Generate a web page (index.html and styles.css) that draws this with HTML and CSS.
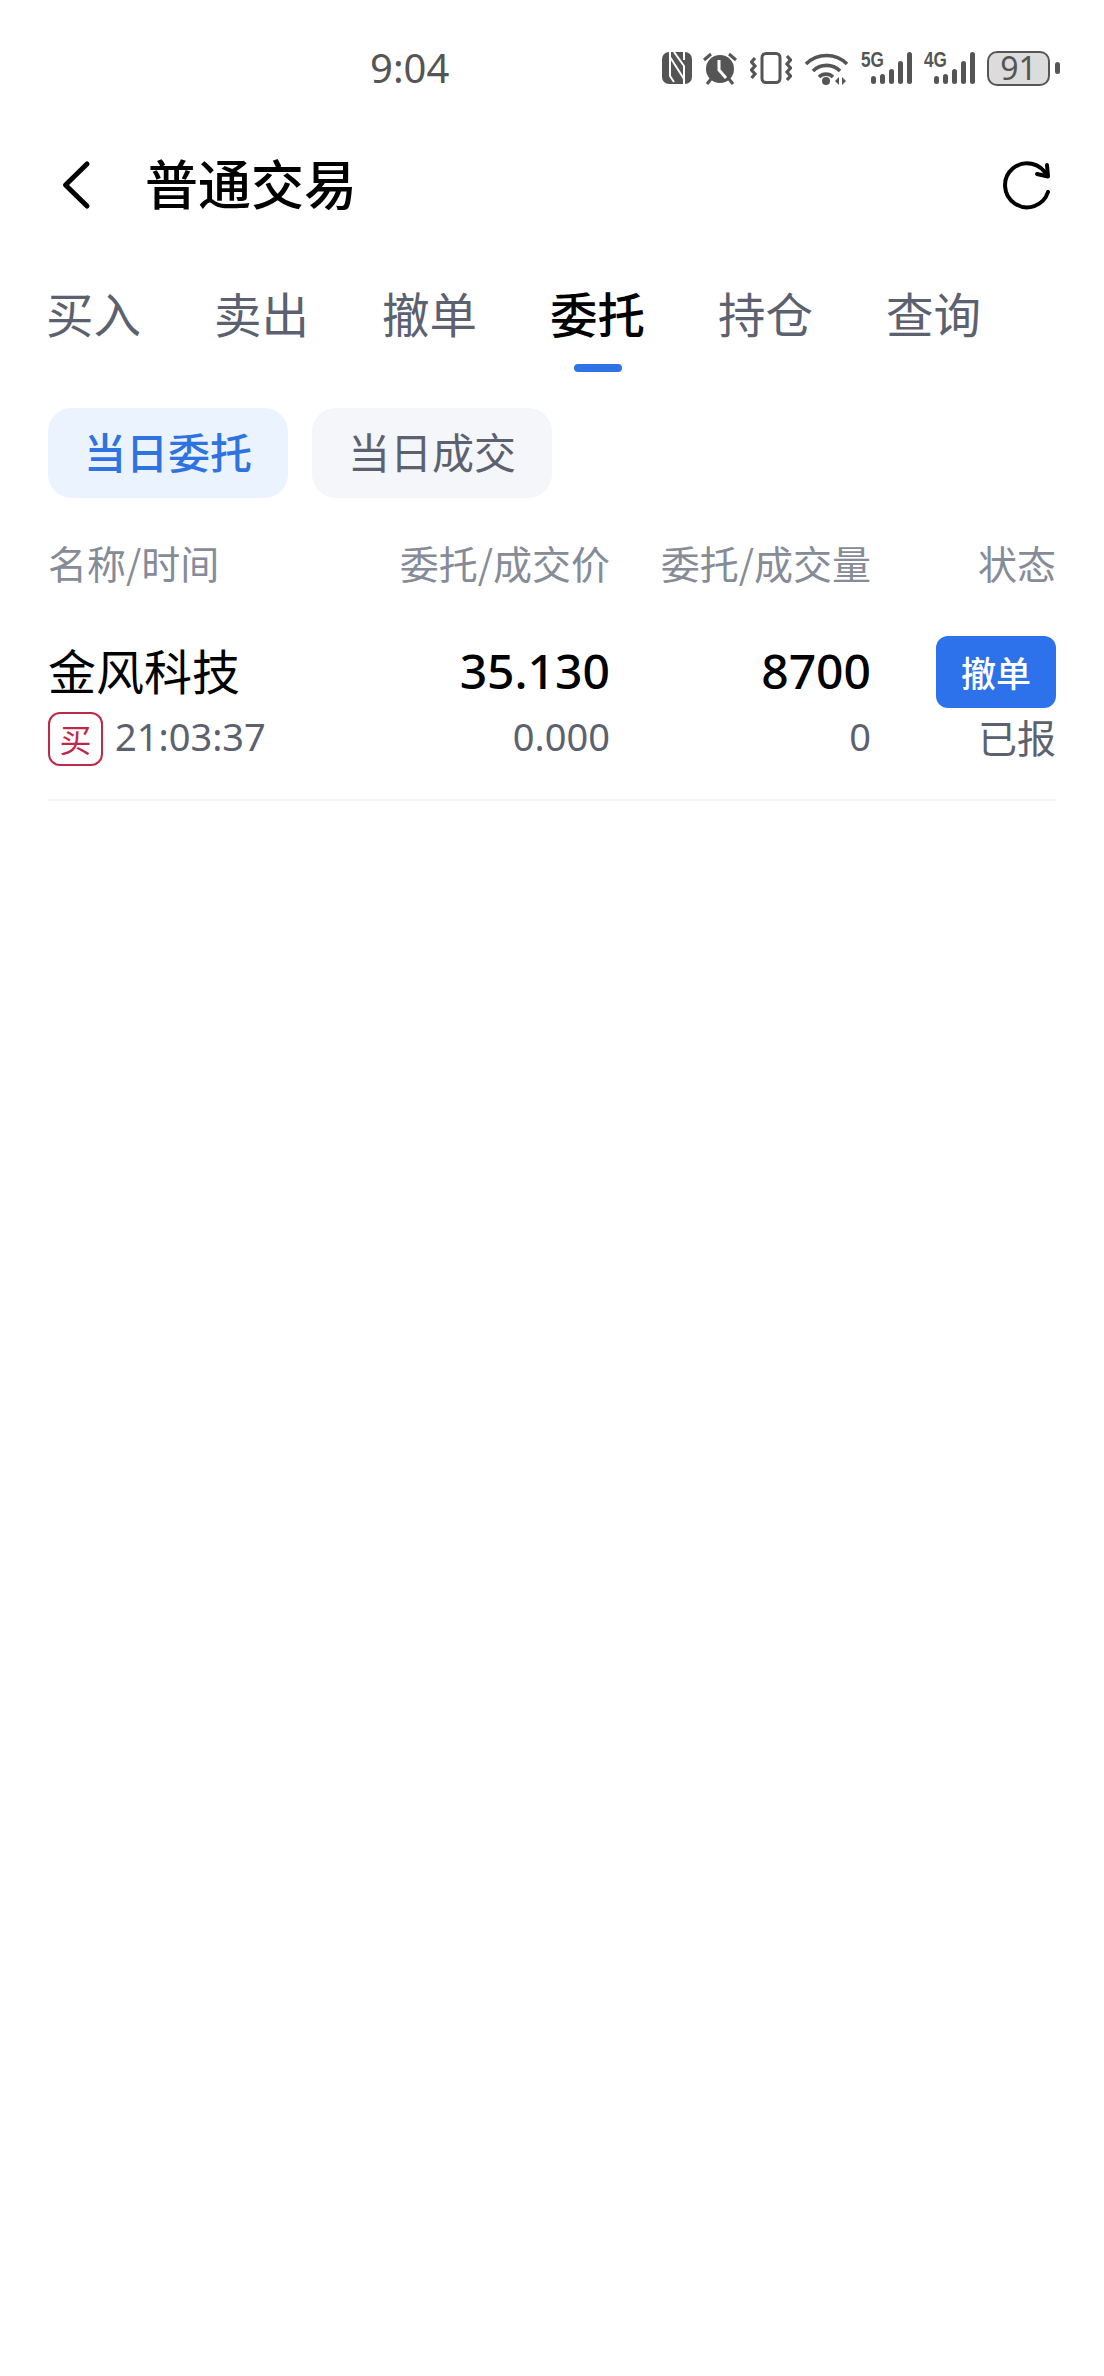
FILE: index.html
```html
<!DOCTYPE html>
<html lang="zh-CN">
<head>
<meta charset="utf-8">
<title>普通交易</title>
<link rel="stylesheet" href="styles.css">
</head>
<body>
<div class="page">
  <div class="status">
    <span class="time">9:04</span>
    <div class="status-icons">
      <svg width="30" height="32" viewBox="0 0 30 32"><rect width="30" height="32" rx="7" fill="#555"/><path d="M8 0V24L12 30M8 5L22 27V32M22 0V8M12 0L22 14V27" fill="none" stroke="#fff" stroke-width="2"/></svg>
      <svg class="alarm" width="36" height="34" viewBox="0 0 36 34"><circle cx="18" cy="18" r="14" fill="#555"/><path d="M17 9v10l7 8" fill="none" stroke="#fff" stroke-width="3"/><path d="M2 9l7-6M34 9l-7-6M9 28l-4 5M27 28l4 5" stroke="#555" stroke-width="3" fill="none"/></svg>
      <svg width="42" height="32" viewBox="0 0 42 32"><rect x="12" y="1.500" width="18" height="29" rx="4" fill="none" stroke="#555" stroke-width="3"/><path d="M5 6l-3.500 4 3.500 4-3.500 4 3.500 4-3.500 4M37 4l3.500 4-3.500 4 3.500 4-3.500 4 3.500 4-3.500 4" fill="none" stroke="#555" stroke-width="3.200"/></svg>
      <svg width="45" height="34" viewBox="0 0 45 34"><path d="M2 13a29 29 0 0 1 41 0M9 20a19 19 0 0 1 27 0M15 26a10 10 0 0 1 14 0" fill="none" stroke="#555" stroke-width="3.600"/><circle cx="22" cy="30" r="4" fill="#555"/><path d="M35 26l-4 4 4 4zM38 26l4 4-4 4z" fill="#555"/></svg>
      <div class="sig"><span class="sig-label">5G</span><svg width="41" height="32" viewBox="0 0 41 32"><g fill="#555"><rect x="0" y="24" width="5" height="8" rx="2.500"/><rect x="9" y="22" width="5" height="10" rx="2.500"/><rect x="18" y="17" width="5" height="15" rx="2.500"/><rect x="27" y="9" width="5" height="23" rx="2.500"/><rect x="36" y="0" width="5" height="32" rx="2.500"/></g></svg></div>
      <div class="sig"><span class="sig-label">4G</span><svg width="41" height="32" viewBox="0 0 41 32"><g fill="#555"><rect x="0" y="24" width="5" height="8" rx="2.500"/><rect x="9" y="22" width="5" height="10" rx="2.500"/><rect x="18" y="17" width="5" height="15" rx="2.500"/><rect x="27" y="9" width="5" height="23" rx="2.500"/><rect x="36" y="0" width="5" height="32" rx="2.500"/></g></svg></div>
      <div class="battery"><span class="battery-body">91</span><span class="battery-nub"></span></div>
    </div>
  </div>
  <header class="nav">
    <svg class="back" width="36" height="52" viewBox="0 0 36 52"><path d="M31 5L9.500 26L31 47" fill="none" stroke="#000" stroke-width="5" stroke-linecap="round" stroke-linejoin="round"/></svg>
    <h1 class="title">普通交易</h1>
    <svg class="refresh" width="52" height="52" viewBox="0 0 52 52"><path d="M47 33A22 22 0 1 1 46 17" fill="none" stroke="#000" stroke-width="4" stroke-linecap="round"/><path d="M46 6L47 17.500L36 15" fill="none" stroke="#000" stroke-width="4" stroke-linecap="round" stroke-linejoin="round"/></svg>
  </header>
  <nav class="tabs">
    <span class="tab">买入</span>
    <span class="tab">卖出</span>
    <span class="tab">撤单</span>
    <span class="tab tab-on">委托</span>
    <span class="tab">持仓</span>
    <span class="tab">查询</span>
  </nav>
  <div class="pills">
    <span class="pill pill-on">当日委托</span>
    <span class="pill">当日成交</span>
  </div>
  <div class="table-head">
    <span>名称/时间</span>
    <span class="r">委托/成交价</span>
    <span class="r">委托/成交量</span>
    <span class="r">状态</span>
  </div>
  <div class="row">
    <span class="name">金风科技</span>
    <span class="num r">35.130</span>
    <span class="num r">8700</span>
    <div class="r action"><button class="cancel">撤单</button></div>
    <div class="when"><span class="buy">买</span><span class="clock">21:03:37</span></div>
    <span class="sub r">0.000</span>
    <span class="sub r">0</span>
    <span class="sub r state">已报</span>
  </div>
</div>
</body>
</html>
```
FILE: styles.css
```css
* { box-sizing: border-box; }
html, body { margin: 0; padding: 0; background: #fff; }
body { font-family: "Noto Sans CJK SC", "Noto Sans", sans-serif; }
.page { width: 1104px; min-height: 2376px; background: #fff; overflow: hidden; }

.status { height: 134px; display: flex; align-items: center; padding: 0 44px 0 370px; justify-content: space-between; }
.time { font-family: "Noto Sans", sans-serif; font-size: 40px; color: #555; line-height: 48px; margin-top: 2px; }
.status-icons { display: flex; align-items: center; gap: 12px; margin-top: 2px; }
.alarm { margin-left: -2px; }
.sig { position: relative; width: 51px; height: 32px; display: flex; justify-content: flex-end; }
.sig-label { position: absolute; left: 0; top: -2px; font: 700 22px/20px "Liberation Sans", sans-serif; color: #555; transform: scaleX(0.78); transform-origin: left center; }
.battery { display: flex; align-items: center; gap: 5px; }
.battery-body { width: 63px; height: 35px; border: 2.5px solid #555; border-radius: 10px; background: #dcdcdc; color: #555; font: 32px/30px "Noto Sans", sans-serif; text-align: center; }
.battery-nub { width: 5px; height: 12px; border-radius: 3px; background: #555; }

.nav { height: 96px; margin-top: 3px; display: flex; align-items: center; padding: 0 51px 0 56px; }
.back { flex: none; }
.title { margin: -6px 0 0 53px; font-size: 53px; font-weight: 500; line-height: 70px; color: #000; flex: 1; }
.refresh { flex: none; }

.tabs { display: flex; gap: 72px; padding: 0 46px; margin-top: 46px; height: 89px; }
.tab { position: relative; font-size: 47.500px; line-height: 68px; color: #5c6170; width: 96px; white-space: nowrap; }
.tab-on { color: #000; font-weight: 500; }
.tab-on::after { content: ""; position: absolute; left: 24px; top: 85px; width: 48px; height: 8px; border-radius: 4px; background: #2f73e8; }

.pills { display: flex; gap: 24px; padding: 0 48px; margin-top: 40px; }
.pill { width: 240px; height: 90px; border-radius: 24px; background: #f4f6fa; color: #5c6170; font-size: 42px; line-height: 86px; text-align: center; }
.pill-on { background: #ebf3fe; color: #2f73e0; font-weight: 500; }

.table-head, .row { display: grid; grid-template-columns: 302px 260px 261px 185px; margin: 0 48px; }
.table-head { margin-top: 36px; font-size: 39px; line-height: 56px; color: #868b98; }
.r { text-align: right; }

.row { margin-top: 43px; height: 168px; align-content: start; border-bottom: 2px solid #f2f3f5; grid-template-rows: 78px 56px; }
.name { font-size: 48px; line-height: 72px; color: #000; }
.num { font-family: "Noto Sans", sans-serif; font-size: 48px; font-weight: 500; line-height: 75px; color: #000; }
.action { display: flex; justify-content: flex-end; align-items: center; }
.cancel { width: 120px; height: 72px; border: 0; border-radius: 12px; background: #2d72ea; color: #fff; font: 500 35px/72px "Noto Sans CJK SC", sans-serif; padding: 0; }
.when { display: flex; align-items: center; gap: 12px; font-family: "Noto Sans", sans-serif; font-size: 38px; color: #5c6170; }
.clock { line-height: 50px; margin-bottom: 6px; }
.buy { width: 55px; height: 54px; border: 2px solid #c0284a; border-radius: 12px; color: #c0284a; font: 32px/48px "Noto Sans CJK SC", sans-serif; text-align: center; }
.sub { font-family: "Noto Sans", sans-serif; font-size: 38px; line-height: 50px; color: #5c6170; }
.state { font-family: "Noto Sans CJK SC", sans-serif; font-size: 39px; }
```
